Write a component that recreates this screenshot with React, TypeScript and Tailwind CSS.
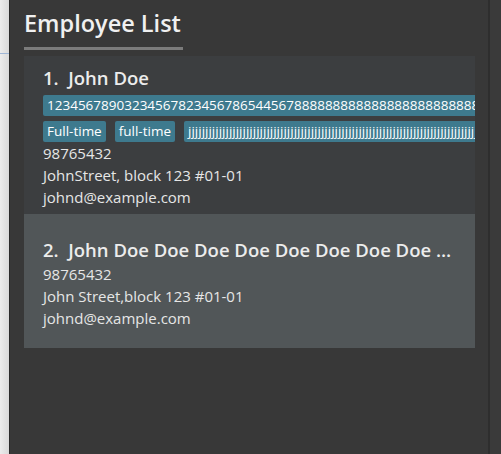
import React from 'react';

type Employee = {
  name: string;
  tags: string[][];
  phone: string;
  address: string;
  email: string;
  selected?: boolean;
};

const employees: Employee[] = [
  {
    name: 'John Doe',
    tags: [
      ['12345678903234567823456786544567888888888888888888888888888888888888888888888'],
      ['Full-time', 'full-time', 'jjjjjjjjjjjjjjjjjjjjjjjjjjjjjjjjjjjjjjjjjjjjjjjjjjjjjjjjjjjjjjjjjjjjjjjjjjjjjjjjjjjjjjjjjjjjjjjjjjjj'],
    ],
    phone: '98765432',
    address: 'JohnStreet, block 123 #01-01',
    email: 'johnd@example.com',
  },
  {
    name: 'John Doe Doe Doe Doe Doe Doe Doe Doe Doe Doe',
    tags: [],
    phone: '98765432',
    address: 'John Street,block 123 #01-01',
    email: 'johnd@example.com',
    selected: true,
  },
];

const font = { fontFamily: '"Open Sans", "Noto Sans", sans-serif' };

const Card: React.FC<{ e: Employee; index: number }> = ({ e, index }) => (
  <div
    className={
      e.selected
        ? 'bg-[#515658] pl-[19px] pr-[18px] pt-[23px] pb-[19px]'
        : 'bg-[#3c3e40] pl-[19px] pr-[18px] pt-[9px] pb-[6px]'
    }
  >
    <div className="text-[18.5px] font-semibold text-[#ececec] leading-[26px] truncate">
      {index}.&nbsp;&nbsp;{e.name}
    </div>
    {e.tags.map((row, i) => (
      <div
        key={i}
        className={`flex gap-[9px] overflow-hidden whitespace-nowrap -mr-[18px] ${i === 0 ? 'mt-[4px]' : 'mt-[5px]'}`}
      >
        {row.map((t) => (
          <span
            key={t}
            className="bg-[#3e7a8e] text-white text-[13.5px] leading-[21px] px-[4px] rounded-[2px] shrink-0"
          >
            {t}
          </span>
        ))}
      </div>
    ))}
    <div className="text-[15px] text-[#e6e6e6] leading-[22px]">
      <div>{e.phone}</div>
      <div>{e.address}</div>
      <div>{e.email}</div>
    </div>
  </div>
);

export default function App() {
  return (
    <div className="w-[501px] h-[454px] flex bg-[#383838]" style={font}>
      <div className="w-[9px] bg-gradient-to-r from-[#ececec] to-[#d9d9d9] relative">
        <div className="absolute left-0 right-0 top-[53px] h-[1px] bg-[#9fb6d6]" />
      </div>
      <div className="w-[1px] bg-[#2b2b2b]" />
      <div className="w-[478px] bg-[#383838] pl-[14px] pr-[13px] pt-[7px]">
        <div className="inline-block">
          <h1 className="text-[23.5px] font-semibold text-[#f0f0f0] leading-[32px] pb-[8px]">Employee List</h1>
          <div className="h-[3px] bg-[#7b7b7b] w-[159px]" />
        </div>
        <div className="mt-[6px] overflow-hidden">
          {employees.map((e, i) => (
            <Card key={i} e={e} index={i + 1} />
          ))}
        </div>
      </div>
      <div className="w-[2px] bg-[#2e2e2e]" />
      <div className="flex-1 bg-[#3a3a3a]" />
    </div>
  );
}
